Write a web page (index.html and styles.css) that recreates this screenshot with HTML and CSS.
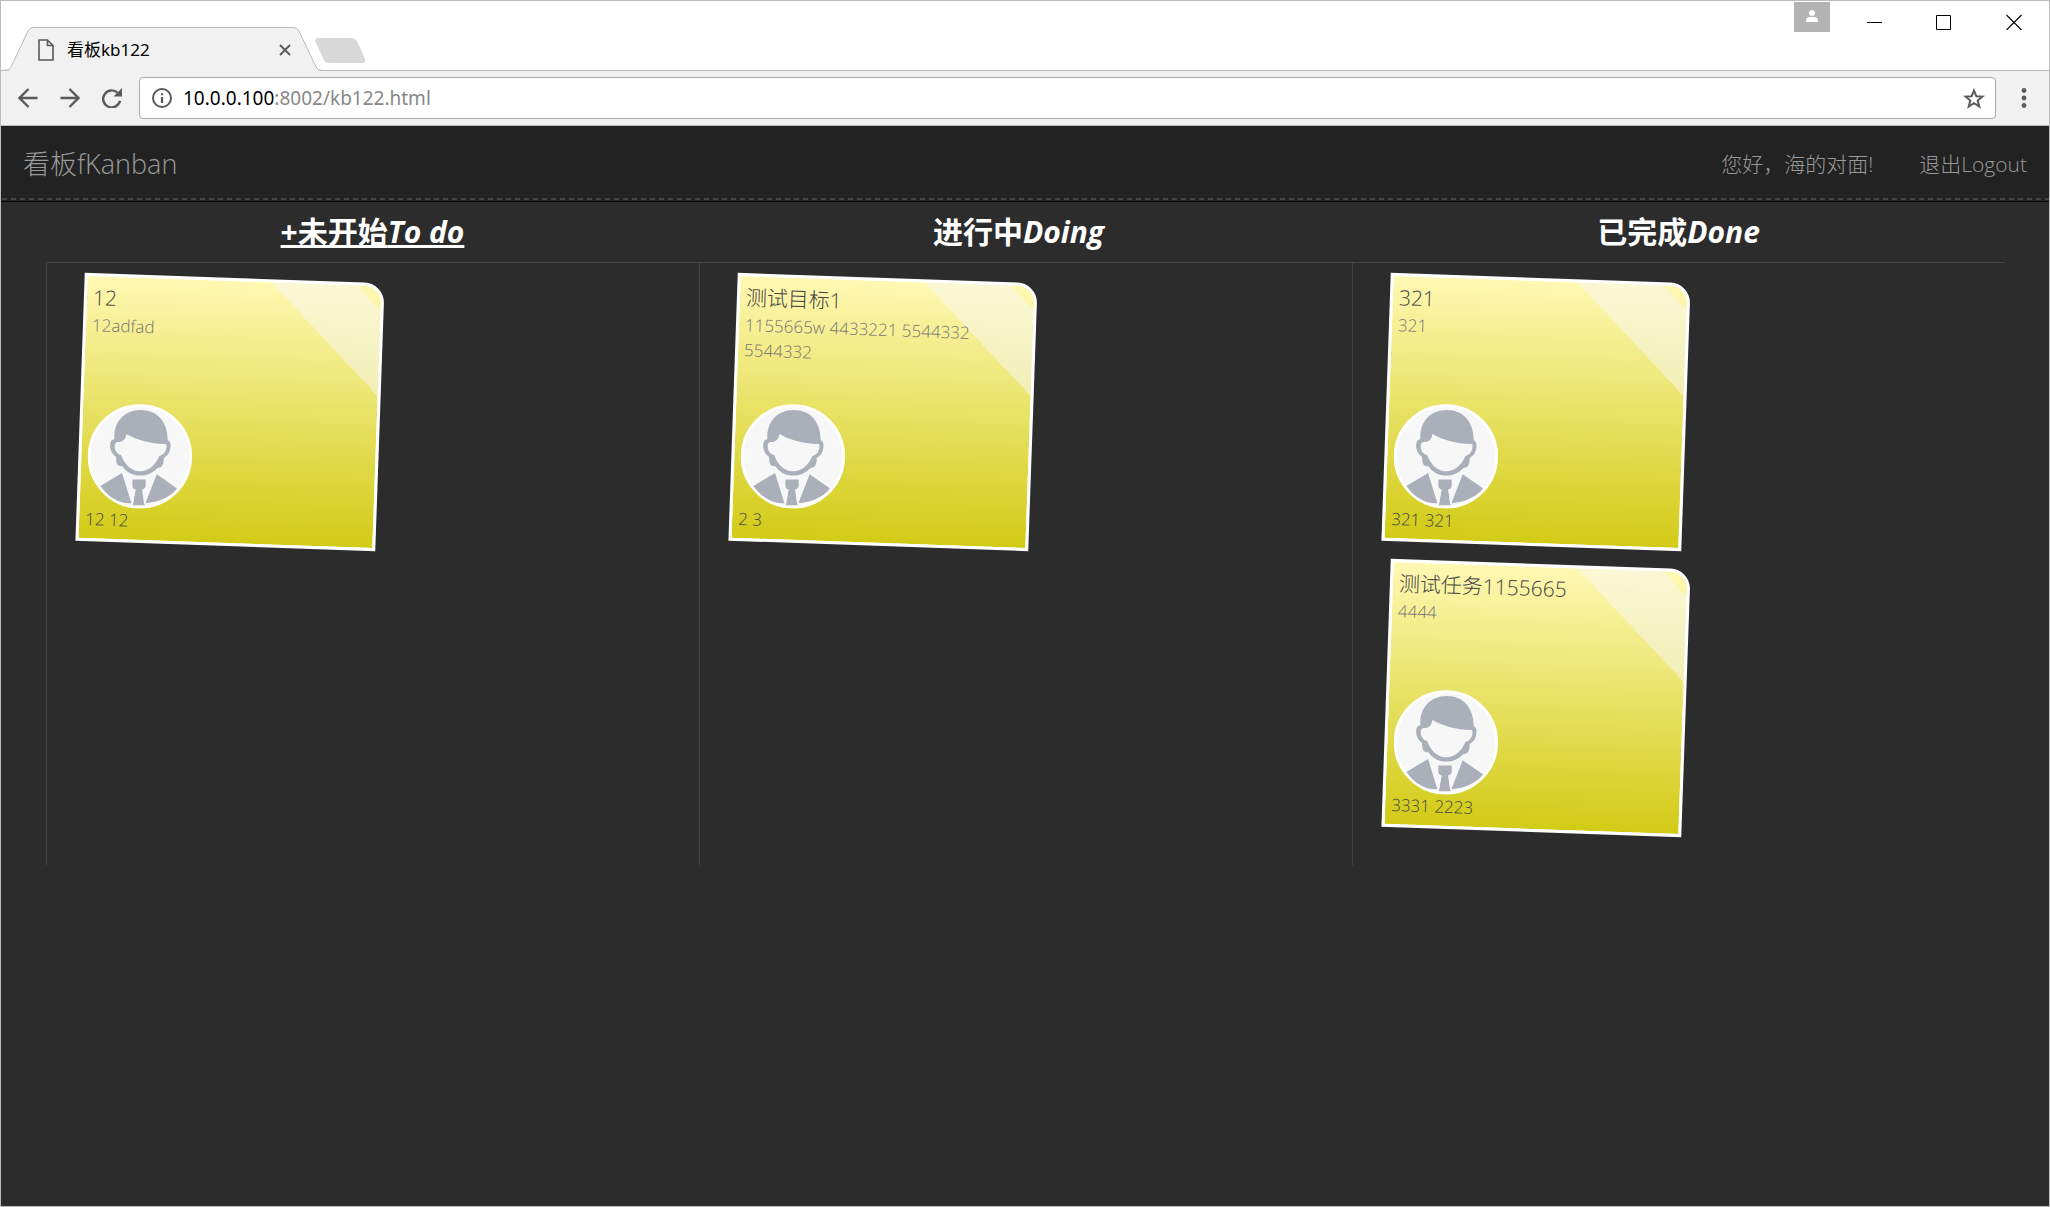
FILE: index.html
```html
<!DOCTYPE html>
<html lang="zh-CN">
<head>
<meta charset="utf-8">
<title>看板kb122</title>
<link rel="stylesheet" href="styles.css">
</head>
<body>
<svg class="defs" aria-hidden="true">
  <symbol id="avatar" viewBox="82 431 315 315">
    <circle cx="239.500" cy="588.500" r="152" fill="#f7f7f7" stroke="#fff" stroke-width="9"/>
    <g transform="rotate(-2 240 589)">
      <path fill="#aaafb9" d="M163 537C160 485 192 449 242 449C293 449 323 485 323 540C332 544 333 556 330 566C328 580 321 586 311 593C311 612 307 623 292 623C279 638 261 646 240 646C218 646 199 636 187 618C172 618 168 610 168 590C153 580 148 560 151 548C153 541 157 537 163 537Z"/>
      <path fill="#f7f7f7" d="M199 521C233 540 270 550 314 551C319 550 321 556 319 562C318 575 310 585 298 587C287 612 268 633 240 633C212 633 193 610 183 584C168 582 161 564 165 551C166 546 172 545 179 545C190 543 197 535 199 521Z"/>
      <path fill="#aaafb9" d="M186 638L121 677C146 712 178 731 214 729ZM290 642L256 729C296 726 329 712 351 685ZM217 658H257V676C257 682 253 687 246 688L254 735H218L227 688C220 687 217 683 217 676Z"/>
      <path fill="#f7f7f7" d="M225 689L214 729L219 731ZM247 689L257 729L252 731Z"/>
    </g>
  </symbol>
</svg>
<div class="window">
  <header class="titlebar">
    <div class="tab">
      <svg class="tab-shape" viewBox="0 0 320 44" preserveAspectRatio="none" aria-hidden="true"><path d="M0 43.500Q7 43.500 9 40L26 4Q28 .500 31 .500H292Q295 .500 297 4L314 40Q316 43.500 320 43.500" fill="#f1f1f1" stroke="#b9b9b9"/><path d="M8 43.500H316" stroke="#f1f1f1" stroke-width="2"/></svg>
      <svg class="file-icon" viewBox="0 0 16 22" fill="none" stroke="#5a5a5a" stroke-width="1.600" aria-hidden="true"><path d="M1 1H9.500L15 6.500V21H1ZM9.500 1V6.500H15"/></svg>
      <span class="tab-title">看板kb122</span>
      <button class="tab-close" aria-label="关闭标签页"><svg viewBox="0 0 12 12" stroke="#5a5a5a" stroke-width="1.900"><path d="M1 1L11 11M11 1L1 11"/></svg></button>
    </div>
    <button class="new-tab" aria-label="新标签页"><svg viewBox="0 0 51 25"><path d="M3 0H37Q40 0 42 3L50 21Q51 25 48 25H14Q10 25 9 22L0 3Q0 0 3 0Z" fill="#d8d8d8"/></svg></button>
    <div class="window-controls">
      <button class="profile" aria-label="用户"><svg viewBox="0 0 12 12" fill="#fff"><circle cx="6" cy="3" r="3"/><path d="M0 12V10Q0 7 4 7H8Q12 7 12 10V12Z"/></svg></button>
      <button aria-label="最小化"><svg viewBox="0 0 16 16" stroke="#000"><path d="M1 8.500H16"/></svg></button>
      <button aria-label="最大化"><svg viewBox="0 0 16 16" fill="none" stroke="#000"><path d="M.500 1.500H14.500V15.500H.500Z"/></svg></button>
      <button aria-label="关闭"><svg viewBox="0 0 16 16" stroke="#000" stroke-width="1.100"><path d="M.500 1L15.500 16M15.500 1L.500 16"/></svg></button>
    </div>
  </header>
  <div class="toolbar">
    <button aria-label="后退"><svg viewBox="0 0 20 20" fill="none" stroke="#5a5a5a" stroke-width="2.400"><path d="M19.500 10H2M10.500 1L1.500 10L10.500 19"/></svg></button>
    <button aria-label="前进"><svg viewBox="0 0 20 20" fill="none" stroke="#5a5a5a" stroke-width="2.400"><path d="M.500 10H18M9.500 1L18.500 10L9.500 19"/></svg></button>
    <button aria-label="刷新"><svg viewBox="0 0 20 20"><path d="M16 4.500A8.500 8.500 0 1 0 18.500 12.500" transform="translate(-.500 .200)" fill="none" stroke="#5a5a5a" stroke-width="2.400"/><path d="M20 0V8.500H11.500Z" fill="#5a5a5a"/></svg></button>
    <div class="address">
      <svg class="info-icon" viewBox="0 0 20 20" fill="none" stroke="#5a5a5a" stroke-width="2" aria-hidden="true"><circle cx="10" cy="10" r="9"/><path d="M10 9V15M10 5.300V7.300" stroke-width="2.200"/></svg>
      <span class="url"><span class="host">10.0.0.100</span>:8002/kb122.html</span>
      <button aria-label="添加书签"><svg class="star" viewBox="0 0 22 21" fill="none" stroke="#5a5a5a" stroke-width="2"><path d="M11 2.500L13.300 8.200L19.500 8.600L14.700 12.500L16.300 18.600L11 15.200L5.700 18.600L7.300 12.500L2.500 8.600L8.700 8.200Z"/></svg></button>
    </div>
    <button class="menu" aria-label="菜单"><svg viewBox="0 0 6 20" fill="#5a5a5a"><circle cx="3" cy="2.500" r="2.400"/><circle cx="3" cy="10" r="2.400"/><circle cx="3" cy="17.500" r="2.400"/></svg></button>
  </div>
  <div class="page">
    <nav class="navbar">
      <a class="brand" href="#">看板fKanban</a>
      <div class="nav-links"><a href="#">您好，海的对面!</a><a href="#">退出Logout</a></div>
    </nav>
    <main class="board">
      <section class="column">
        <h2><a href="#">+未开始<i>To do</i></a></h2>
        <div class="notes">
          <article class="note"><h3>12</h3><p>12adfad</p><svg class="avatar"><use href="#avatar"/></svg><footer>12 12</footer></article>
        </div>
      </section>
      <section class="column doing">
        <h2>进行中<i>Doing</i></h2>
        <div class="notes">
          <article class="note"><h3>测试目标1</h3><p>1155665w 4433221 5544332 5544332</p><svg class="avatar"><use href="#avatar"/></svg><footer>2 3</footer></article>
        </div>
      </section>
      <section class="column">
        <h2>已完成<i>Done</i></h2>
        <div class="notes">
          <article class="note"><h3>321</h3><p>321</p><svg class="avatar"><use href="#avatar"/></svg><footer>321 321</footer></article>
          <article class="note"><h3>测试任务1155665</h3><p>4444</p><svg class="avatar"><use href="#avatar"/></svg><footer>3331 2223</footer></article>
        </div>
      </section>
    </main>
  </div>
</div>
</body>
</html>
```
FILE: styles.css
```css
* { box-sizing: border-box; }
body {
  margin: 0;
  font-family: "Open Sans", "Noto Sans CJK SC", sans-serif;
}
a { color: inherit; text-decoration: none; }
button { display: flex; align-items: center; justify-content: center; padding: 0; border: 0; background: none; }
h2, h3, p { margin: 0; }
svg { display: block; }
.defs { display: none; }

.window {
  display: flex;
  flex-direction: column;
  min-height: 100vh;
  border: 1px solid #bbb;
  background: #fff;
}

/* Tab strip */
.titlebar {
  display: flex;
  align-items: flex-end;
  height: 70px;
  padding-left: 1px;
  border-bottom: 1px solid #b9b9b9;
}
.tab {
  position: relative;
  display: flex;
  align-items: center;
  width: 320px;
  height: 44px;
  margin-bottom: -1px;
  padding: 1px 31px 0 36px;
}
.tab-shape { position: absolute; inset: 0; width: 100%; height: 100%; }
.file-icon { position: relative; width: 16px; height: 22px; margin-right: 13px; }
.tab-title { position: relative; flex: 1; font-family: "Noto Sans", "Noto Sans CJK SC", sans-serif; font-size: 17px; line-height: 24px; }
.tab-close { position: relative; }
.tab-close svg { width: 12px; height: 12px; }
.new-tab { margin: 0 0 7px -7px; }
.new-tab svg { width: 51px; height: 25px; }
.window-controls { display: flex; align-self: flex-start; margin: 1px 0 0 auto; }
.window-controls button { width: 70px; height: 40px; }
.window-controls svg { width: 16px; height: 16px; }
.window-controls .profile { width: 36px; height: 30px; margin-right: 9px; padding-bottom: 3px; background: #b3b3b3; }
.window-controls .profile svg { width: 12px; height: 12px; }

/* Address row */
.toolbar {
  display: flex;
  align-items: center;
  gap: 22px;
  height: 55px;
  padding: 0 22px 0 17px;
  border-bottom: 1px solid #b9b9b9;
  background: #f1f1f1;
}
.toolbar svg { width: 20px; height: 20px; }
.address {
  display: flex;
  flex: 1;
  align-items: center;
  gap: 11px;
  height: 42px;
  margin: 0 3px 0 -5px;
  padding: 0 10px 0 12px;
  border: 1px solid #aaa;
  border-radius: 4px;
  background: #fff;
}
.url { flex: 1; font-family: "Noto Sans", sans-serif; font-size: 19px; line-height: 26px; color: #888; }
.host { color: #000; }
.address .star { width: 22px; height: 21px; }
.toolbar .menu svg { width: 6px; }

/* Board */
.page { flex: 1; background: #2c2c2c; }
.navbar {
  display: flex;
  align-items: center;
  justify-content: space-between;
  height: 76px;
  padding: 0 22px;
  border-bottom: 1px solid #080808;
  background: repeating-linear-gradient(90deg, #444 0 5px, transparent 5px 9px) 1px 72px / 100% 2px no-repeat #222;
  color: #999;
  font-weight: 300;
}
.brand { font-size: 27px; line-height: 36px; }
.nav-links { display: flex; gap: 46px; font-size: 21px; line-height: 30px; }
.board {
  display: grid;
  grid-template-columns: repeat(3, 1fr);
  padding: 0 44px 0 45px;
}
.column { display: flex; flex-direction: column; }
.column h2 {
  padding: 10px 0;
  color: #fff;
  font-size: 30px;
  line-height: 40px;
  font-weight: 700;
  text-align: center;
}
.column h2 a {
  text-decoration: underline;
  text-decoration-thickness: 3px;
  text-decoration-skip-ink: none;
}
.doing h2 { padding-right: 14px; }
.notes {
  display: flex;
  flex: 1;
  flex-direction: column;
  align-items: flex-start;
  gap: 18px;
  padding: 15px 33px;
  border-top: 1px solid #444;
  border-left: 1px solid #444;
  min-height: 603px;
}
.note {
  display: flex;
  flex-direction: column;
  width: 300px;
  height: 268px;
  padding: 6px 6px 5px;
  border: 3px solid #fff;
  border-top-right-radius: 20px;
  background:
    linear-gradient(45deg, transparent 50%, rgba(247, 247, 247, .5) 50% 89%, transparent 89%) top right / 110px 110px no-repeat,
    linear-gradient(#fff8b3, #d2cb16) no-repeat #fff;
  color: #444;
  font-weight: 300;
  transform: rotate(2deg);
}
.note h3 { font-size: 21px; line-height: 30px; font-weight: 300; }
.note p { width: 240px; font-size: 17px; line-height: 25px; color: #777; }
.avatar {
  width: 105px;
  height: 105px;
  flex: none;
  margin-top: auto;
}
.note footer { padding-bottom: 2px; font-size: 17px; line-height: 24px; }
```
